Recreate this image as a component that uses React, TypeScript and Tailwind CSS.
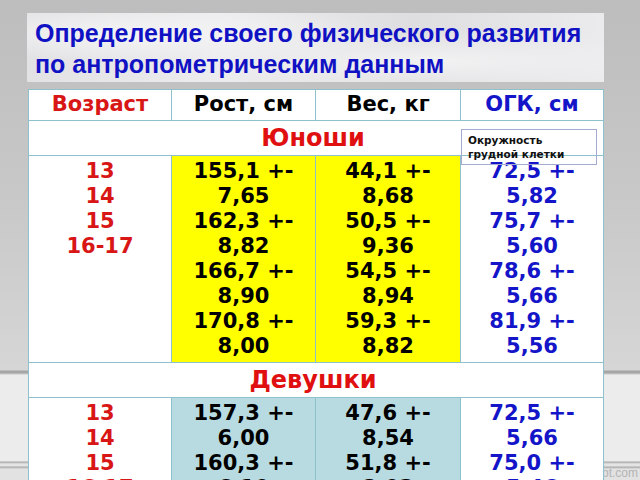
const boys = {
  h: ["155,1 +-", "7,65", "162,3 +-", "8,82", "166,7 +-", "8,90", "170,8 +-", "8,00"],
  w: ["44,1 +-", "8,68", "50,5 +-", "9,36", "54,5 +-", "8,94", "59,3 +-", "8,82"],
  c: ["72,5 +-", "5,82", "75,7 +-", "5,60", "78,6 +-", "5,66", "81,9 +-", "5,56"],
};
const girls = {
  h: ["157,3 +-", "6,00", "160,3 +-", "6,10", "162,3 +-", "5,90", "163,5 +-", "5,80"],
  w: ["47,6 +-", "8,54", "51,8 +-", "8,03", "53,6 +-", "7,50", "55,3 +-", "7,60"],
  c: ["72,5 +-", "5,66", "75,0 +-", "5,46", "77,3 +-", "5,54", "78,8 +-", "5,00"],
};
const ages = ["13", "14", "15", "16-17"];

function Lines({ items }: { items: string[] }) {
  return (
    <>
      {items.map((t, i) => (
        <div key={i} className="h-[25px] leading-[25px] whitespace-nowrap">
          {t}
        </div>
      ))}
    </>
  );
}

function DataRow({ d, bg }: { d: { h: string[]; w: string[]; c: string[] }; bg: string }) {
  return (
    <>
      <div className="border-r border-b border-[#8fc1cc] bg-white pt-[3px] pb-[3px] text-center text-[#d81616]">
        <Lines items={ages} />
      </div>
      <div className={`border-r border-b border-[#8fc1cc] pt-[3px] pb-[3px] text-center text-black ${bg}`}>
        <Lines items={d.h} />
      </div>
      <div className={`border-r border-b border-[#8fc1cc] pt-[3px] pb-[3px] text-center text-black ${bg}`}>
        <Lines items={d.w} />
      </div>
      <div className="border-r border-b border-[#8fc1cc] bg-white pt-[3px] pb-[3px] text-center text-[#1414c8]">
        <Lines items={d.c} />
      </div>
    </>
  );
}

function GroupRow({ label }: { label: string }) {
  return (
    <div className="col-span-4 flex h-[35px] items-center justify-center border-r border-b border-[#8fc1cc] bg-white pr-[6px] text-[24px] text-[#e01010]">
      {label}
    </div>
  );
}

export default function App() {
  return (
    <div className="relative h-[480px] w-[640px] overflow-hidden bg-[linear-gradient(to_bottom,#bdbdbd_0px,#c8c8c8_200px,#d6d6d6_370px,#a4a4a4_371px,#a8a8a8_373px,#ececec_375px,#ececec_461px,#a8a8a8_462px,#e4e4e4_464px,#e4e4e4_466px,#a8a8a8_467px,#e2e2e2_469px)] pl-[27px] pt-[13px]">
      <div className="absolute bottom-[-2px] right-[2px] font-['Liberation_Sans',sans-serif] text-[12px] text-[#b4b4b4]">
        ppt.com
      </div>
      <div className="relative flex h-[69px] w-[577px] flex-col justify-center bg-[radial-gradient(ellipse_at_20%_30%,#f4f4f5_0%,transparent_40%),radial-gradient(ellipse_at_70%_70%,#f2f2f3_0%,transparent_45%),linear-gradient(to_right,#e2e2e4,#ececee,#dedee0,#ebebed)] pl-[8px] pt-[3px] font-['Liberation_Sans',sans-serif] text-[25px] font-bold leading-[31px] text-[#1111c4]">
        <div>Определение своего физического развития</div>
        <div>по антропометрическим данным</div>
      </div>
      <div className="relative ml-[1px] mt-[7px] w-[576px] font-['DejaVu_Sans',sans-serif] text-[21px] font-bold">
        <div className="grid grid-cols-[143px_144px_145px_143px] border-l border-t border-[#8fc1cc]">
          <div className="flex h-[31px] items-center justify-center border-r border-b border-[#8fc1cc] bg-white text-[#d81616]">
            Возраст
          </div>
          <div className="flex h-[31px] items-center justify-center border-r border-b border-[#8fc1cc] bg-white text-black">
            Рост, см
          </div>
          <div className="flex h-[31px] items-center justify-center border-r border-b border-[#8fc1cc] bg-white text-black">
            Вес, кг
          </div>
          <div className="flex h-[31px] items-center justify-center border-r border-b border-[#8fc1cc] bg-white text-[#1414c8]">
            ОГК, см
          </div>
          <GroupRow label="Юноши" />
          <DataRow d={boys} bg="bg-[#ffff00]" />
          <GroupRow label="Девушки" />
          <DataRow d={girls} bg="bg-[#b7dbe1]" />
        </div>
        <div className="absolute left-[433px] top-[40px] h-[36px] w-[136px] border border-[#a3acd0] pl-[6px] pt-[3px] text-[10.5px] leading-[14px] text-[#111]">
          <div>Окружность</div>
          <div>грудной клетки</div>
        </div>
      </div>
    </div>
  );
}
